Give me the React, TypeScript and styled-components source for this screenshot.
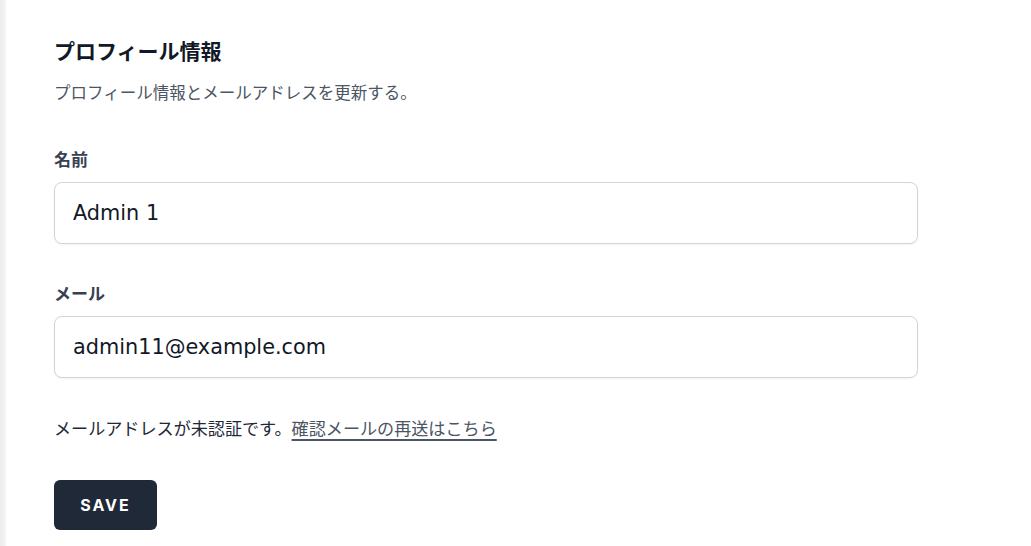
import React from "react";
import styled, { createGlobalStyle } from "styled-components";

const Global = createGlobalStyle`
  html, body { margin: 0; padding: 0; background: #ffffff; }
  body { font-family: "Inter", "Noto Sans CJK JP", sans-serif; }
`;

const Page = styled.div`
  display: flex;
  min-height: 546px;
`;

const SideStrip = styled.div`
  width: 6px;
  flex: none;
  background: linear-gradient(to right, #ececef, #f3f4f6);
`;

const Section = styled.section`
  flex: 1;
  padding: 34px 0 0 48px;
  max-width: 864px;
`;

const Title = styled.h2`
  margin: 0;
  font-size: 21px;
  line-height: 32px;
  font-weight: 700;
  color: #111827;
  font-family: "Noto Sans CJK JP", sans-serif;
`;

const Subtitle = styled.p`
  margin: 14px 0 0;
  font-size: 16.5px;
  line-height: 24px;
  color: #4b5563;
  font-family: "Noto Sans CJK JP", sans-serif;
`;

const Field = styled.div<{ $top: number }>`
  display: flex;
  flex-direction: column;
  margin-top: ${(p) => p.$top}px;
`;

const Label = styled.label`
  font-size: 17px;
  line-height: 24px;
  font-weight: 600;
  color: #374151;
  font-family: "Noto Sans CJK JP", sans-serif;
`;

const Input = styled.input`
  margin-top: 11px;
  box-sizing: border-box;
  width: 864px;
  height: 62px;
  padding: 0 18px;
  border: 1px solid #d1d5db;
  border-radius: 8px;
  box-shadow: 0 1px 2px rgba(0, 0, 0, 0.05);
  font-family: "DejaVu Sans", sans-serif;
  font-size: 20.8px;
  color: #111827;
  background: #fff;
  outline: none;
`;

const Note = styled.p`
  margin: 37px 0 0;
  font-size: 17.1px;
  line-height: 26px;
  color: #1f2937;
  font-family: "Noto Sans CJK JP", sans-serif;
`;

const Link = styled.a`
  color: #4b5563;
  text-decoration: underline;
  text-underline-offset: 4px;
  text-decoration-thickness: 2px;
  cursor: pointer;
`;

const SaveButton = styled.button`
  margin-top: 39px;
  width: 103px;
  height: 50px;
  border: none;
  border-radius: 6px;
  background: #1f2937;
  color: #ffffff;
  font-family: "Inter", sans-serif;
  font-weight: 700;
  font-size: 16px;
  letter-spacing: 2px;
  text-transform: uppercase;
  cursor: pointer;
`;

export default function App() {
  return (
    <>
      <Global />
      <Page>
        <SideStrip />
        <Section>
          <Title>プロフィール情報</Title>
          <Subtitle>プロフィール情報とメールアドレスを更新する。</Subtitle>
          <Field $top={43}>
            <Label>名前</Label>
            <Input defaultValue="Admin 1" />
          </Field>
          <Field $top={37}>
            <Label>メール</Label>
            <Input defaultValue="admin11@example.com" />
          </Field>
          <Note>
            メールアドレスが未認証です。<Link>確認メールの再送はこちら</Link>
          </Note>
          <div>
            <SaveButton>Save</SaveButton>
          </div>
        </Section>
      </Page>
    </>
  );
}
